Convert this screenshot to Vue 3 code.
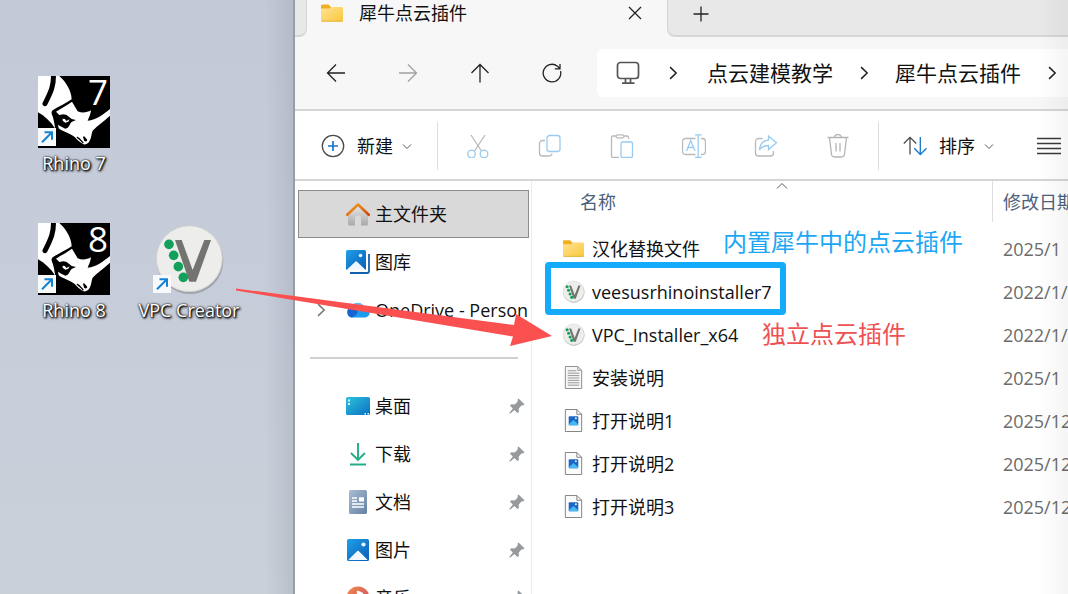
<template>
  <div class="screen">
    <svg class="sprite" aria-hidden="true">
      <defs>
        <linearGradient id="g-folder" x1="0" y1="0" x2="1" y2="1">
          <stop offset="0" stop-color="#ffe394" />
          <stop offset="1" stop-color="#f9c83c" />
        </linearGradient>
        <linearGradient id="g-blue" x1="0" y1="0" x2="1" y2="1">
          <stop offset="0" stop-color="#1fa0e8" />
          <stop offset="1" stop-color="#0a5cb4" />
        </linearGradient>
        <linearGradient id="g-teal" x1="0" y1="0" x2="1" y2="1">
          <stop offset="0" stop-color="#2cc3dc" />
          <stop offset="1" stop-color="#0b6fc2" />
        </linearGradient>
        <linearGradient id="g-roof" x1="0" y1="0" x2="1" y2="1">
          <stop offset="0" stop-color="#f5a623" />
          <stop offset="1" stop-color="#d0440f" />
        </linearGradient>
        <linearGradient id="g-wall" x1="0" y1="0" x2="0" y2="1">
          <stop offset="0" stop-color="#e9e9e9" />
          <stop offset="1" stop-color="#a9a9a9" />
        </linearGradient>
        <linearGradient id="g-doc" x1="0" y1="0" x2="1" y2="1">
          <stop offset="0" stop-color="#a9bdd2" />
          <stop offset="1" stop-color="#6481a3" />
        </linearGradient>
        <linearGradient id="g-music" x1="0" y1="0" x2="1" y2="1">
          <stop offset="0" stop-color="#f08a4b" />
          <stop offset="1" stop-color="#c94a6a" />
        </linearGradient>
      </defs>
      <symbol id="i-folder" viewBox="0 0 24 24">
        <path d="M1 5a1.500 1.500 0 0 1 1.500-1.500h6l2.500 2.500h11v6H1z" fill="#efb01f" stroke="none" />
        <path d="M1 7.500h8.500l1.500-1.500h10.500a1.500 1.500 0 0 1 1.500 1.500V19.500a1 1 0 0 1-1 1H2a1 1 0 0 1-1-1z" fill="url(#g-folder)" stroke="none" />
        <path d="M1.500 20.200h21" stroke="#e0a92a" stroke-width=".8" />
      </symbol>
      <symbol id="i-logo" viewBox="0 0 216 216">
        <circle cx="111" cy="113" r="100" fill="#7d828b" opacity=".55" />
        <circle cx="109" cy="107" r="99" fill="#ededec" stroke="#cfcfcf" stroke-width="3" />
        <path d="M66 51H86L119 141L154 51H174L129 176H109Z" fill="#73736f" />
        <g fill="#12a05a">
          <circle cx="48" cy="64" r="14.500" />
          <circle cx="62" cy="97" r="14.500" />
          <circle cx="76" cy="131" r="14.500" />
          <circle cx="91" cy="163" r="14.500" />
        </g>
      </symbol>
      <symbol id="i-rhino" viewBox="0 0 216 216">
        <rect width="216" height="216" fill="#000" />
        <path d="M0 0H64C82 16 100 42 101 70C84 82 64 90 44 103C41 106 40 109 41 113C47 126 49 141 52 158C38 137 20 120 0 109Z" fill="#fff" />
        <path d="M46-4C48 26 40 46 21 83" fill="none" stroke="#000" stroke-width="15" stroke-linecap="round" />
        <path d="M102 77L119 106C132 112 147 110 159 103C158 115 153 124 149 134C176 132 197 114 216 99V119C198 136 178 149 164 164C160 172 161 186 153 198C149 203 142 206 137 205C126 200 117 191 110 183C93 170 74 167 62 157L60 146L66 150L82 158C94 156 94 143 102 137L114 132L101 129L86 117L76 115L64 117L54 107C70 97 88 87 102 77Z" fill="#fff" />
        <path d="M74 128L81 129L85 135L95 130L91 137L82 140L74 134Z" fill="#fff" />
        <path d="M118 184C124 187 129 194 135 200M137 182L145 191C147 194 143 196 140 193Z" fill="#000" stroke="#000" stroke-width="4" stroke-linecap="round" />
      </symbol>
      <symbol id="i-shortcut" viewBox="0 0 18 18">
        <rect width="18" height="18" fill="#f8f9fb" />
        <path d="M4 14.200L13.500 4.700M6.500 4.300H14V11.800" fill="none" stroke="#1583d3" stroke-width="2" />
      </symbol>
      <symbol id="i-home" viewBox="0 0 24 24">
        <path d="M2 12L12 3l10 9v10a1.500 1.500 0 0 1-1.500 1.500H15v-7a3 3 0 0 0-6 0v7H3.500A1.500 1.500 0 0 1 2 22z" fill="url(#g-wall)" />
        <path d="M1.200 12.800L12 2.500l10.800 10.300" fill="none" stroke="url(#g-roof)" stroke-width="2.600" stroke-linecap="round" stroke-linejoin="round" />
      </symbol>
      <symbol id="i-gallery" viewBox="0 0 24 24">
        <path d="M23 4v17a2 2 0 0 1-2 2H4" fill="none" stroke="#1260ae" stroke-width="1.800" />
        <rect width="20" height="20" rx="1.500" fill="url(#g-blue)" />
        <path d="M1 19.500l8.500-8a1 1 0 0 1 1.200 0l8.500 8a1 1 0 0 1-.7.500H1.500z" fill="#f1f8ff" />
        <circle cx="14.500" cy="5.500" r="1.800" fill="#e9f5ff" />
      </symbol>
      <symbol id="i-cloud" viewBox="0 0 24 24">
        <path d="M5.500 19.500A5.500 5.500 0 0 1 5 9a7.500 7.500 0 0 1 13.500.5A5 5 0 0 1 19 19.500z" fill="#1b9cf0" />
        <path d="M5 9a7.500 7.500 0 0 1 13.500.5c-5-.5-7 3.500-13 5z" fill="#64b9f2" />
        <path d="M5.500 19.500A5.500 5.500 0 0 1 5 9c5-1 8 3 6 6.500-1 2-3 3.500-5.500 4z" fill="#1763d1" />
      </symbol>
      <symbol id="i-desktop" viewBox="0 0 24 24">
        <rect y="3" width="24" height="18" rx="1.500" fill="url(#g-teal)" />
        <path d="M2 5.500h2v2H2zM2 9h2v2H2zM18.500 19h1.500v1.500h-1.500zM21.500 19H23v1.500h-1.500z" fill="#d7f6ff" />
      </symbol>
      <symbol id="i-download" viewBox="0 0 24 24">
        <path d="M12 1v16.500M5 11l7 7 7-7M4 22.500h16" fill="none" stroke="#22ad86" stroke-width="1.900" />
      </symbol>
      <symbol id="i-document" viewBox="0 0 24 24">
        <rect x="3" width="18" height="24" rx="1.500" fill="url(#g-doc)" />
        <path d="M6 8h5M6 11h5M6 14h12M6 17h12" stroke="#fff" stroke-width="1.300" />
        <path d="M13 7.300h5v4.200h-5z" fill="#fff" />
      </symbol>
      <symbol id="i-picture" viewBox="0 0 24 24">
        <rect x="1" y="1" width="22" height="22" rx="1.500" fill="url(#g-blue)" />
        <path d="M2.500 21.800L11.300 13a1 1 0 0 1 1.400 0l8.800 8.800a1 1 0 0 1-.7.300H3.200z" fill="#f1f8ff" />
        <circle cx="17.500" cy="6.500" r="2.100" fill="#e9f5ff" />
      </symbol>
      <symbol id="i-music" viewBox="0 0 24 24">
        <circle cx="12" cy="12" r="11.500" fill="url(#g-music)" />
        <path d="M11.500 5v10.500M11.500 5l5 2.500v3l-5-2.500" fill="#fff" stroke="#fff" stroke-width="1.300" />
        <circle cx="9.700" cy="15.800" r="2.600" fill="#fff" />
      </symbol>
      <symbol id="i-pin" viewBox="0 0 16 16">
        <path d="M9.600.6l5.900 5.700-1.300 1.200-1.500-.2-3 3.100.2 3.500-1.500 1.200-3-3-4.300 3.600-.8-.8 3.500-4.300L1 7.700l1.300-1.400 3.400.2 3.200-3.300-.4-1.500z" fill="#959a9e" />
      </symbol>
      <symbol id="i-text" viewBox="0 0 24 24">
        <path d="M3.500.5h13l4 4v19h-17z" fill="#f7f7f7" stroke="#8b8b8b" />
        <path d="M16.500.5v4h4M6 5h9M6 7.500h12M6 10h12M6 12.500h12M6 15h12M6 17.500h12M6 20h12" fill="none" stroke="#929292" />
      </symbol>
      <symbol id="i-image" viewBox="0 0 24 24">
        <path d="M3.500.5h12l5 5v18h-17z" fill="#fbfbfb" stroke="#7f7f7f" />
        <path d="M15.500.5v5h5" fill="none" stroke="#7f7f7f" />
        <rect x="7" y="7.500" width="10" height="9.500" rx="1" fill="#1c67c4" />
        <path d="M7 16l5-4.500 5 4.500v1H7z" fill="#43b8f2" />
        <circle cx="14.500" cy="9.700" r="1" fill="#e9f5ff" />
      </symbol>
      <symbol id="i-left" viewBox="0 0 24 24">
        <path d="M21 12H3.500M12 3.500L3.500 12l8.500 8.500" />
      </symbol>
      <symbol id="i-right" viewBox="0 0 24 24">
        <path d="M3 12h17.500M12 3.500l8.500 8.500-8.500 8.500" />
      </symbol>
      <symbol id="i-up" viewBox="0 0 24 24">
        <path d="M12 21.500V3.500M3.500 12L12 3.500l8.500 8.500" />
      </symbol>
      <symbol id="i-refresh" viewBox="0 0 24 24">
        <path d="M20.600 10.200A8.800 8.800 0 1 1 17.500 5.200L20 7.700M20 3v4.900h-5.200" />
      </symbol>
      <symbol id="i-cut" viewBox="0 0 24 24">
        <g stroke="#b9b9b9"><path d="M5 1l10.500 16M19 1L8.500 17" /></g>
        <g stroke="#98cbef"><circle cx="5.500" cy="20" r="3.800" /><circle cx="18" cy="20" r="3.800" /></g>
      </symbol>
      <symbol id="i-copy" viewBox="0 0 24 24">
        <path d="M7 6.500H4.500a3 3 0 0 0-3 3V19a3 3 0 0 0 3 3H11a3 3 0 0 0 3-2.500" stroke="#b9b9b9" />
        <rect x="9" y="1.500" width="13" height="16" rx="2.500" stroke="#98cbef" />
      </symbol>
      <symbol id="i-paste" viewBox="0 0 24 24">
        <path d="M9 23.500H3a1.500 1.500 0 0 1-1.500-1.500V3.500A1.500 1.500 0 0 1 3 2h3M14 2h3a1.500 1.500 0 0 1 1.500 1.500V5M7.500.8h5a1.500 1.500 0 0 1 0 3h-5a1.500 1.500 0 0 1 0-3z" stroke="#b9b9b9" />
        <rect x="11" y="8" width="11.500" height="15.500" rx="1.500" stroke="#98cbef" />
      </symbol>
      <symbol id="i-rename" viewBox="0 0 24 24">
        <path d="M13.500 20.500h-10a3 3 0 0 1-3-3v-10a3 3 0 0 1 3-3h10M19 4.500h1.500a3 3 0 0 1 3 3v10a3 3 0 0 1-3 3H19" stroke="#b9b9b9" />
        <path d="M4.500 17l4.200-10.500L13 17M6 13.500h5.500M16.200 1v22.500M13 .8h6.500M13 23.400h6.500" stroke="#98cbef" />
      </symbol>
      <symbol id="i-share" viewBox="0 0 24 24">
        <path d="M8.500 4.500H4.500a3 3 0 0 0-3 3V19a3 3 0 0 0 3 3h12a3 3 0 0 0 3-3v-2" stroke="#b9b9b9" />
        <path d="M14.500 2l8 6.800-8 6.700v-4c-4.500 0-7 1.500-9 4.500.5-6 4-9.500 9-10z" stroke="#98cbef" />
      </symbol>
      <symbol id="i-trash" viewBox="0 0 24 24">
        <path d="M1.500 3.500h21M8.500 3.500a3.500 3 0 0 1 7 0M3.500 3.500L5.500 20.500a3 3 0 0 0 3 2.500h7a3 3 0 0 0 3-2.500L20.500 3.500M10 9v8.500M14 9v8.500" stroke="#b5b5b5" />
      </symbol>
      <symbol id="i-sort" viewBox="0 0 24 24">
        <path d="M7 20.500V3.500M.8 9.500L7 3.300l6.200 6.200" stroke="#4c4c4c" />
        <path d="M17.300 3v17.500M11.300 14.300l6 6.200 6.200-6.200" stroke="#1677c8" />
      </symbol>
      <symbol id="i-lines" viewBox="0 0 24 24">
        <path d="M0 4.500h24M0 9.500h24M0 14.500h24M0 19.500h24" stroke="#3a3a3a" />
      </symbol>
      <symbol id="i-plus-circle" viewBox="0 0 24 24">
        <circle cx="12" cy="12" r="10.700" stroke="#4a4a4a" />
        <path d="M12 7v10M7 12h10" stroke="#1677c8" stroke-width="1.700" />
      </symbol>
      <symbol id="i-monitor" viewBox="0 0 24 24">
        <rect x="1.500" y="1.500" width="21" height="16" rx="3" />
        <path d="M9.500 17.500v4M14.500 17.500v4M6 22.200h12.500" />
      </symbol>
      <symbol id="i-chevron" viewBox="0 0 12 12">
        <path d="M3.500 1l5.200 5-5.200 5" />
      </symbol>
      <symbol id="i-down" viewBox="0 0 12 12">
        <path d="M2 4.500l4 4 4-4" />
      </symbol>
    </svg>

    <main class="desktop">
      <button v-for="app in apps" :key="app.name" type="button" class="app" :class="{ first: app.first }">
        <span class="app-icon">
          <svg class="app-art"><use :href="app.icon" /></svg>
          <span v-if="app.version" class="version">{{ app.version }}</span>
          <svg class="shortcut"><use href="#i-shortcut" /></svg>
        </span>
        <span class="app-name">{{ app.name }}</span>
      </button>
    </main>

    <section class="window">
      <header class="tabs">
        <div class="tab-prev"></div>
        <div class="tab">
          <svg class="icon"><use href="#i-folder" /></svg>
          <span class="tab-title">犀牛点云插件</span>
          <button type="button" class="tab-close" aria-label="关闭">
            <svg viewBox="0 0 14 14"><path d="M1 1l12 12M13 1L1 13" /></svg>
          </button>
        </div>
        <div class="tab-rest">
          <button type="button" class="tab-add" aria-label="新标签页">
            <svg viewBox="0 0 16 16"><path d="M8 .5v15M.5 8h15" /></svg>
          </button>
        </div>
      </header>

      <nav class="nav">
        <button v-for="b in navButtons" :key="b.icon" type="button" class="nav-btn" :disabled="b.disabled" :aria-label="b.label">
          <svg class="line"><use :href="b.icon" /></svg>
        </button>
        <div class="address">
          <svg class="monitor"><use href="#i-monitor" /></svg>
          <template v-for="crumb in crumbs" :key="crumb">
            <svg class="crumb-sep"><use href="#i-chevron" /></svg>
            <a href="#" class="crumb">{{ crumb }}</a>
          </template>
          <svg class="crumb-sep"><use href="#i-chevron" /></svg>
        </div>
      </nav>

      <div class="toolbar">
        <button type="button" class="tool-menu">
          <svg class="line"><use href="#i-plus-circle" /></svg>
          <span>新建</span>
          <svg class="caret"><use href="#i-down" /></svg>
        </button>
        <div class="tools">
          <button v-for="t in tools" :key="t.icon" type="button" class="tool" disabled :aria-label="t.label">
            <svg class="line"><use :href="t.icon" /></svg>
          </button>
        </div>
        <button type="button" class="tool-menu">
          <svg class="line"><use href="#i-sort" /></svg>
          <span>排序</span>
          <svg class="caret"><use href="#i-down" /></svg>
        </button>
        <button type="button" class="tool-view" aria-label="查看">
          <svg class="line"><use href="#i-lines" /></svg>
        </button>
      </div>

      <div class="content">
        <aside class="sidebar">
          <a v-for="p in places" :key="p.name" href="#" class="place" :class="{ active: p.active, wide: p.expand }">
            <span class="expand">
              <svg v-if="p.expand"><use href="#i-chevron" /></svg>
            </span>
            <svg class="place-icon"><use :href="p.icon" /></svg>
            <span class="place-name">{{ p.name }}</span>
          </a>
          <div class="divider"><hr /></div>
          <a v-for="p in pinned" :key="p.name" href="#" class="place">
            <span class="expand"></span>
            <svg class="place-icon"><use :href="p.icon" /></svg>
            <span class="place-name">{{ p.name }}</span>
            <svg class="pin"><use href="#i-pin" /></svg>
          </a>
        </aside>

        <div class="files">
          <table>
            <thead>
              <tr>
                <th class="col-name">
                  <div class="head head-name">
                    <svg viewBox="0 0 12 8"><path d="M1 6.500l5-5 5 5" /></svg>
                    <span>名称</span>
                  </div>
                </th>
                <th>
                  <div class="head head-date">修改日期</div>
                </th>
              </tr>
            </thead>
            <tbody>
              <tr v-for="f in files" :key="f.name">
                <td>
                  <div class="file">
                    <svg><use :href="f.icon" /></svg>
                    <span>{{ f.name }}</span>
                  </div>
                </td>
                <td class="date">{{ f.date }}</td>
              </tr>
            </tbody>
          </table>
        </div>
      </div>
    </section>

    <!-- hand-drawn notes over the desktop -->
    <div class="note-box"></div>
    <span class="note note-blue">内置犀牛中的点云插件</span>
    <span class="note note-red">独立点云插件</span>
    <svg class="arrow" viewBox="0 0 320 60">
      <path d="M1 3.500L279 40L281 29L317 51L275 61L278 51.500L1 5.500Z" />
    </svg>
  </div>
</template>

<script setup>
const apps = [
  { name: 'Rhino 7', icon: '#i-rhino', version: '7', first: true },
  { name: 'Rhino 8', icon: '#i-rhino', version: '8', first: true },
  { name: 'VPC Creator', icon: '#i-logo' }
]

const navButtons = [
  { icon: '#i-left', label: '后退' },
  { icon: '#i-right', label: '前进', disabled: true },
  { icon: '#i-up', label: '向上' },
  { icon: '#i-refresh', label: '刷新' }
]

const crumbs = ['点云建模教学', '犀牛点云插件']

const tools = [
  { icon: '#i-cut', label: '剪切' },
  { icon: '#i-copy', label: '复制' },
  { icon: '#i-paste', label: '粘贴' },
  { icon: '#i-rename', label: '重命名' },
  { icon: '#i-share', label: '共享' },
  { icon: '#i-trash', label: '删除' }
]

const places = [
  { name: '主文件夹', icon: '#i-home', active: true },
  { name: '图库', icon: '#i-gallery' },
  { name: 'OneDrive - Person', icon: '#i-cloud', expand: true }
]

const pinned = [
  { name: '桌面', icon: '#i-desktop' },
  { name: '下载', icon: '#i-download' },
  { name: '文档', icon: '#i-document' },
  { name: '图片', icon: '#i-picture' },
  { name: '音乐', icon: '#i-music' }
]

const files = [
  { name: '汉化替换文件', icon: '#i-folder', date: '2025/1' },
  { name: 'veesusrhinoinstaller7', icon: '#i-logo', date: '2022/1/' },
  { name: 'VPC_Installer_x64', icon: '#i-logo', date: '2022/1/' },
  { name: '安装说明', icon: '#i-text', date: '2025/1' },
  { name: '打开说明1', icon: '#i-image', date: '2025/12' },
  { name: '打开说明2', icon: '#i-image', date: '2025/12' },
  { name: '打开说明3', icon: '#i-image', date: '2025/12' }
]
</script>

<style>
body {
  margin: 0;
}
</style>

<style scoped>
.screen {
  position: relative;
  display: flex;
  height: 100vh;
  overflow: hidden;
  font-family: "Open Sans", "Noto Sans CJK SC", sans-serif;
  font-size: 18px;
  line-height: 24px;
  color: #111;
}

.sprite {
  position: absolute;
  width: 0;
  height: 0;
}

svg {
  display: block;
  flex: none;
}

button {
  padding: 0;
  border: 0;
  background: none;
  font: inherit;
  color: inherit;
}

a {
  color: inherit;
  text-decoration: none;
}

.icon,
.line,
.place-icon {
  width: 24px;
  height: 24px;
}

.line,
.caret,
.monitor,
.crumb-sep,
.expand svg,
.tab-close svg,
.tab-add svg,
.head svg {
  fill: none;
  stroke: #222;
  stroke-width: 1.3;
}

/* desktop */
.desktop {
  box-sizing: border-box;
  flex: none;
  width: 293px;
  padding: 76px 0 0 17px;
  display: grid;
  grid-template-columns: 114px 114px;
  grid-auto-rows: 100px;
  gap: 47px 1px;
  background:
    linear-gradient(to right, transparent 265px, rgba(90, 95, 110, 0.14)),
    linear-gradient(#c3c9d7, #c7ceda 60%, #c8d0d8);
}

.app {
  display: flex;
  flex-direction: column;
  align-items: center;
  gap: 3px;
}

.app.first {
  grid-column: 1;
}

.app-icon {
  position: relative;
}

.app-art {
  width: 72px;
  height: 72px;
}

.version {
  position: absolute;
  top: 0;
  right: 2px;
  font-size: 35px;
  line-height: 32px;
  color: #fff;
}

.shortcut {
  position: absolute;
  left: 0;
  bottom: 2px;
  width: 18px;
  height: 18px;
}

.app-name {
  color: #fff;
  white-space: nowrap;
  text-shadow: 0 0 2px #000, 1px 1px 2px #000, 1px 1px 3px #000;
}

/* explorer window */
.window {
  position: relative;
  flex: 1;
  min-width: 0;
  display: flex;
  flex-direction: column;
  border-left: 2px solid #999da6;
  background: #fff;
  overflow: hidden;
}

.window::after {
  content: "";
  position: absolute;
  inset: 0 0 0 auto;
  width: 32px;
  background: linear-gradient(to right, transparent, rgba(0, 0, 0, 0.04));
  pointer-events: none;
}

.tabs {
  flex: none;
  display: flex;
  height: 37px;
  background: #f7f7f7;
}

.tab-prev {
  box-sizing: border-box;
  width: 12px;
  background: #e8e8e8;
  border-right: 1px solid #d6d6d6;
  border-bottom: 2px solid #d6d6d6;
  border-bottom-right-radius: 8px;
}

.tab {
  box-sizing: border-box;
  flex: none;
  width: 360px;
  height: 26px;
  padding: 0 25px 0 13px;
  display: flex;
  align-items: center;
  gap: 15px;
}

.tab-title {
  flex: 1;
}

.tab-close svg {
  width: 14px;
  height: 14px;
}

.tab-rest {
  box-sizing: border-box;
  flex: 1;
  display: flex;
  align-items: flex-start;
  padding: 6px 25px;
  background: #e8e8e8;
  border-left: 1px solid #d3d3d3;
  border-bottom: 2px solid #d6d6d6;
  border-bottom-left-radius: 8px;
}

.tab-add svg {
  width: 16px;
  height: 16px;
}

.nav {
  flex: none;
  display: flex;
  align-items: center;
  height: 72px;
  padding-left: 5px;
  background: #f7f7f7;
  border-bottom: 2px solid #d5d5d5;
}

.nav-btn {
  flex: none;
  width: 72px;
  height: 48px;
  display: flex;
  align-items: center;
  justify-content: center;
}

.nav-btn:disabled {
  opacity: 0.4;
}

.address {
  flex: 1;
  min-width: 0;
  display: flex;
  align-items: center;
  height: 48px;
  margin-left: 9px;
  padding-left: 19px;
  border-radius: 6px 0 0 6px;
  background: #fff;
  font-size: 21px;
  white-space: nowrap;
}

.monitor {
  width: 24px;
  height: 24px;
  margin-right: 8px;
  stroke: #555;
  stroke-width: 1.7;
}

.crumb-sep {
  width: 14px;
  height: 14px;
  margin: 0 24px;
}

.monitor + .crumb-sep {
  margin-left: 18px;
  margin-right: 27px;
}

/* toolbar */
.toolbar {
  flex: none;
  display: flex;
  align-items: center;
  height: 66px;
  padding-top: 2px;
  padding-left: 26px;
  border-bottom: 2px solid #d5d5d5;
}

.tool-menu {
  display: flex;
  align-items: center;
  height: 48px;
}

.tool-menu span {
  margin: 0 8px 0 12px;
}

.caret {
  width: 12px;
  height: 12px;
  stroke: #555;
  stroke-width: 1;
}

.tools {
  display: flex;
  margin: 0 24px;
  padding: 0 4px;
  border-left: 1px solid #dedede;
  border-right: 1px solid #dedede;
}

.tool {
  width: 72px;
  height: 48px;
  display: flex;
  align-items: center;
  justify-content: center;
}

.tool-view {
  margin-left: 42px;
}

/* content */
.content {
  flex: 1;
  min-height: 0;
  display: flex;
}

.sidebar {
  box-sizing: border-box;
  flex: none;
  width: 237px;
  padding: 9px 2px 0 3px;
  border-right: 1px solid #ececec;
  overflow: hidden;
}

.place {
  box-sizing: border-box;
  display: flex;
  align-items: center;
  height: 48px;
  padding-right: 3px;
  border: 1px solid transparent;
}

.place.active {
  background: #d9d9d9;
  border-color: #8c8c8c;
}

.place.wide {
  padding-right: 0;
}

.expand {
  flex: none;
  width: 47px;
}

.expand svg {
  width: 14px;
  height: 14px;
  margin-left: 15px;
  stroke: #777;
}

.place-name {
  flex: 1;
  min-width: 0;
  margin-left: 5px;
  overflow: hidden;
  white-space: nowrap;
}

.pin {
  width: 16px;
  height: 16px;
}

.divider {
  height: 48px;
  display: flex;
  align-items: center;
  padding: 0 11px 0 12px;
}

.divider hr {
  flex: 1;
  margin: 0;
  border: 0;
  border-top: 2px solid #d0d0d0;
}

.files {
  flex: 1;
  min-width: 0;
  overflow: hidden;
}

table {
  width: 100%;
  table-layout: fixed;
  border-collapse: collapse;
}

th {
  padding: 0 0 5px;
  font-weight: 400;
  text-align: left;
  color: #4c607a;
  overflow: hidden;
}

.col-name {
  width: 86%;
}

.head {
  box-sizing: border-box;
  height: 41px;
  white-space: nowrap;
}

.head-name {
  padding: 1px 8px 0 48px;
  border-right: 1px solid #dedede;
}

.head svg {
  width: 12px;
  height: 8px;
  margin: 0 auto;
  stroke: #555;
  stroke-width: 1;
}

.head-date {
  padding: 9px 0 0 10px;
}

td {
  height: 43px;
  padding: 0;
  overflow: hidden;
  white-space: nowrap;
}

.file {
  display: flex;
  align-items: center;
  gap: 7px;
  padding-left: 30px;
}

.file svg {
  width: 23px;
  height: 23px;
}

.date {
  padding-left: 10px;
  color: #6b6b6b;
}

/* notes */
.note-box {
  position: absolute;
  box-sizing: border-box;
  left: 545px;
  top: 262px;
  width: 241px;
  height: 53px;
  border: 6px solid #14abfb;
  border-radius: 4px;
}

.note {
  position: absolute;
  font-size: 24px;
  line-height: 32px;
  white-space: nowrap;
}

.note-blue {
  left: 723px;
  top: 226px;
  color: #1ca7f5;
}

.note-red {
  left: 762px;
  top: 318px;
  color: #ee5253;
}

.arrow {
  position: absolute;
  left: 235px;
  top: 285px;
  width: 320px;
  height: 60px;
  overflow: visible;
  fill: #fb5050;
}
</style>
